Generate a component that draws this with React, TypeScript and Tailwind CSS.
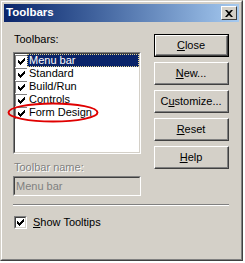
import React from 'react'

const FONT = { fontFamily: '"Liberation Sans", Arial, sans-serif' }

const toolbars = [
  { name: 'Menu bar', selected: true },
  { name: 'Standard' },
  { name: 'Build/Run' },
  { name: 'Controls' },
  { name: 'Form Design' },
]

function Check() {
  return (
    <svg width="7" height="7" viewBox="0 0 7 7" className="block">
      <path d="M0 2h1v1h1v1h1V3h1V2h1V1h1V0h1v3H6v1H5v1H4v1H3v1H2V6H1V5H0z" fill="#000" />
    </svg>
  )
}

function ListCheck() {
  return (
    <div className="w-[12px] h-[12px] shrink-0 bg-white border-t border-l border-[#808080] flex items-center justify-center">
      <Check />
    </div>
  )
}

function Button({ children, isDefault }: { children: React.ReactNode; isDefault?: boolean }) {
  const inner = (
    <div className="h-full border-t border-l border-white border-r-[#404040] border-b-[#404040] border-r border-b">
      <div className="h-full flex items-center justify-center border-r border-b border-[#808080] text-[11px] text-black">
        {children}
      </div>
    </div>
  )
  if (isDefault) {
    return <div className="h-[23px] border border-black">{inner}</div>
  }
  return <div className="h-[23px]">{inner}</div>
}

export default function App() {
  return (
    <div className="w-[245px] h-[263px] bg-white" style={FONT}>
      <div className="relative w-[243px] h-[261px] bg-[#d4d0c8] border-t border-l border-[#d4d0c8] border-r border-b border-r-[#404040] border-b-[#404040]">
        <div className="h-full border-t border-l border-white border-r border-b border-r-[#808080] border-b-[#808080] p-[2px] flex flex-col">
          {/* Title bar */}
          <div className="h-[18px] shrink-0 flex items-center justify-between pl-[2px] pr-[2px] bg-gradient-to-r from-[#0a246a] to-[#a6caf0]">
            <span className="text-white font-bold text-[11.5px] leading-none">Toolbars</span>
            <div className="w-[16px] h-[14px] bg-[#d4d0c8] border-t border-l border-white border-r border-b border-r-[#404040] border-b-[#404040] flex items-center justify-center">
              <svg width="8" height="7" viewBox="0 0 8 7" className="block">
                <path d="M0 0h2l2 2 2-2h2L5 3.5 8 7H6L4 5 2 7H0l3-3.5z" fill="#000" />
              </svg>
            </div>
          </div>

          {/* Body */}
          <div className="flex pl-[9px] pt-[11px]">
            <div className="w-[128px] flex flex-col">
              <div className="text-[11px] leading-[13px] text-black pl-[1px]">Toolbars:</div>
              <div className="mt-[6px] h-[102px] border-t border-l border-[#808080] border-r border-b border-r-white border-b-white">
                <div className="h-full bg-white border-t border-l border-[#404040] border-r border-b border-r-[#d4d0c8] border-b-[#d4d0c8]">
                  {toolbars.map(t => (
                    <div key={t.name} className="h-[13px] flex items-center">
                      <ListCheck />
                      <div
                        className={`flex-1 h-[13px] pl-[1px] text-[11px] leading-[11px] ${
                          t.selected
                            ? 'bg-[#0a246a] text-white border border-dotted border-[#e8d890]'
                            : 'text-black border border-transparent'
                        }`}
                      >
                        {t.name}
                      </div>
                    </div>
                  ))}
                </div>
              </div>

              <div className="mt-[7px] text-[11px] leading-[13px] text-[#808080] pl-[1px] [text-shadow:1px_1px_0_#fff]">
                Toolbar name:
              </div>
              <div className="mt-[2px] h-[20px] border-t border-l border-[#808080] border-r border-b border-r-white border-b-white">
                <div className="h-full border-t border-l border-[#404040] border-r border-b border-r-[#d4d0c8] border-b-[#d4d0c8] flex items-center pl-[1px] text-[11px] text-[#808080]">
                  Menu bar
                </div>
              </div>
            </div>

            <div className="ml-[13px] w-[75px] mt-[1px] flex flex-col gap-[5px]">
              <Button isDefault>
                <span><u>C</u>lose</span>
              </Button>
              <Button>
                <span><u>N</u>ew...</span>
              </Button>
              <Button>
                <span>C<u>u</u>stomize...</span>
              </Button>
              <Button>
                <span><u>R</u>eset</span>
              </Button>
              <Button>
                <span><u>H</u>elp</span>
              </Button>
            </div>
          </div>

          {/* Separator */}
          <div className="ml-[9px] mt-[8px] w-[216px] border-t border-[#808080] border-b border-b-white" />

          {/* Show tooltips */}
          <div className="ml-[10px] mt-[10px] flex items-center gap-[6px]">
            <div className="w-[13px] h-[13px] border-t border-l border-[#808080] border-r border-b border-r-white border-b-white">
              <div className="w-full h-full bg-white border-t border-l border-[#404040] border-r border-b border-r-[#d4d0c8] border-b-[#d4d0c8] flex items-center justify-center">
                <Check />
              </div>
            </div>
            <span className="text-[11px] leading-[13px] text-black">
              <u>S</u>how Tooltips
            </span>
          </div>
        </div>

        {/* Red annotation ellipse */}
        <svg className="absolute left-[6px] top-[101px]" width="92" height="21" viewBox="0 0 92 21">
          <ellipse cx="46" cy="10.5" rx="44.5" ry="9" fill="none" stroke="#e00000" strokeWidth="2" />
        </svg>
      </div>
    </div>
  )
}
